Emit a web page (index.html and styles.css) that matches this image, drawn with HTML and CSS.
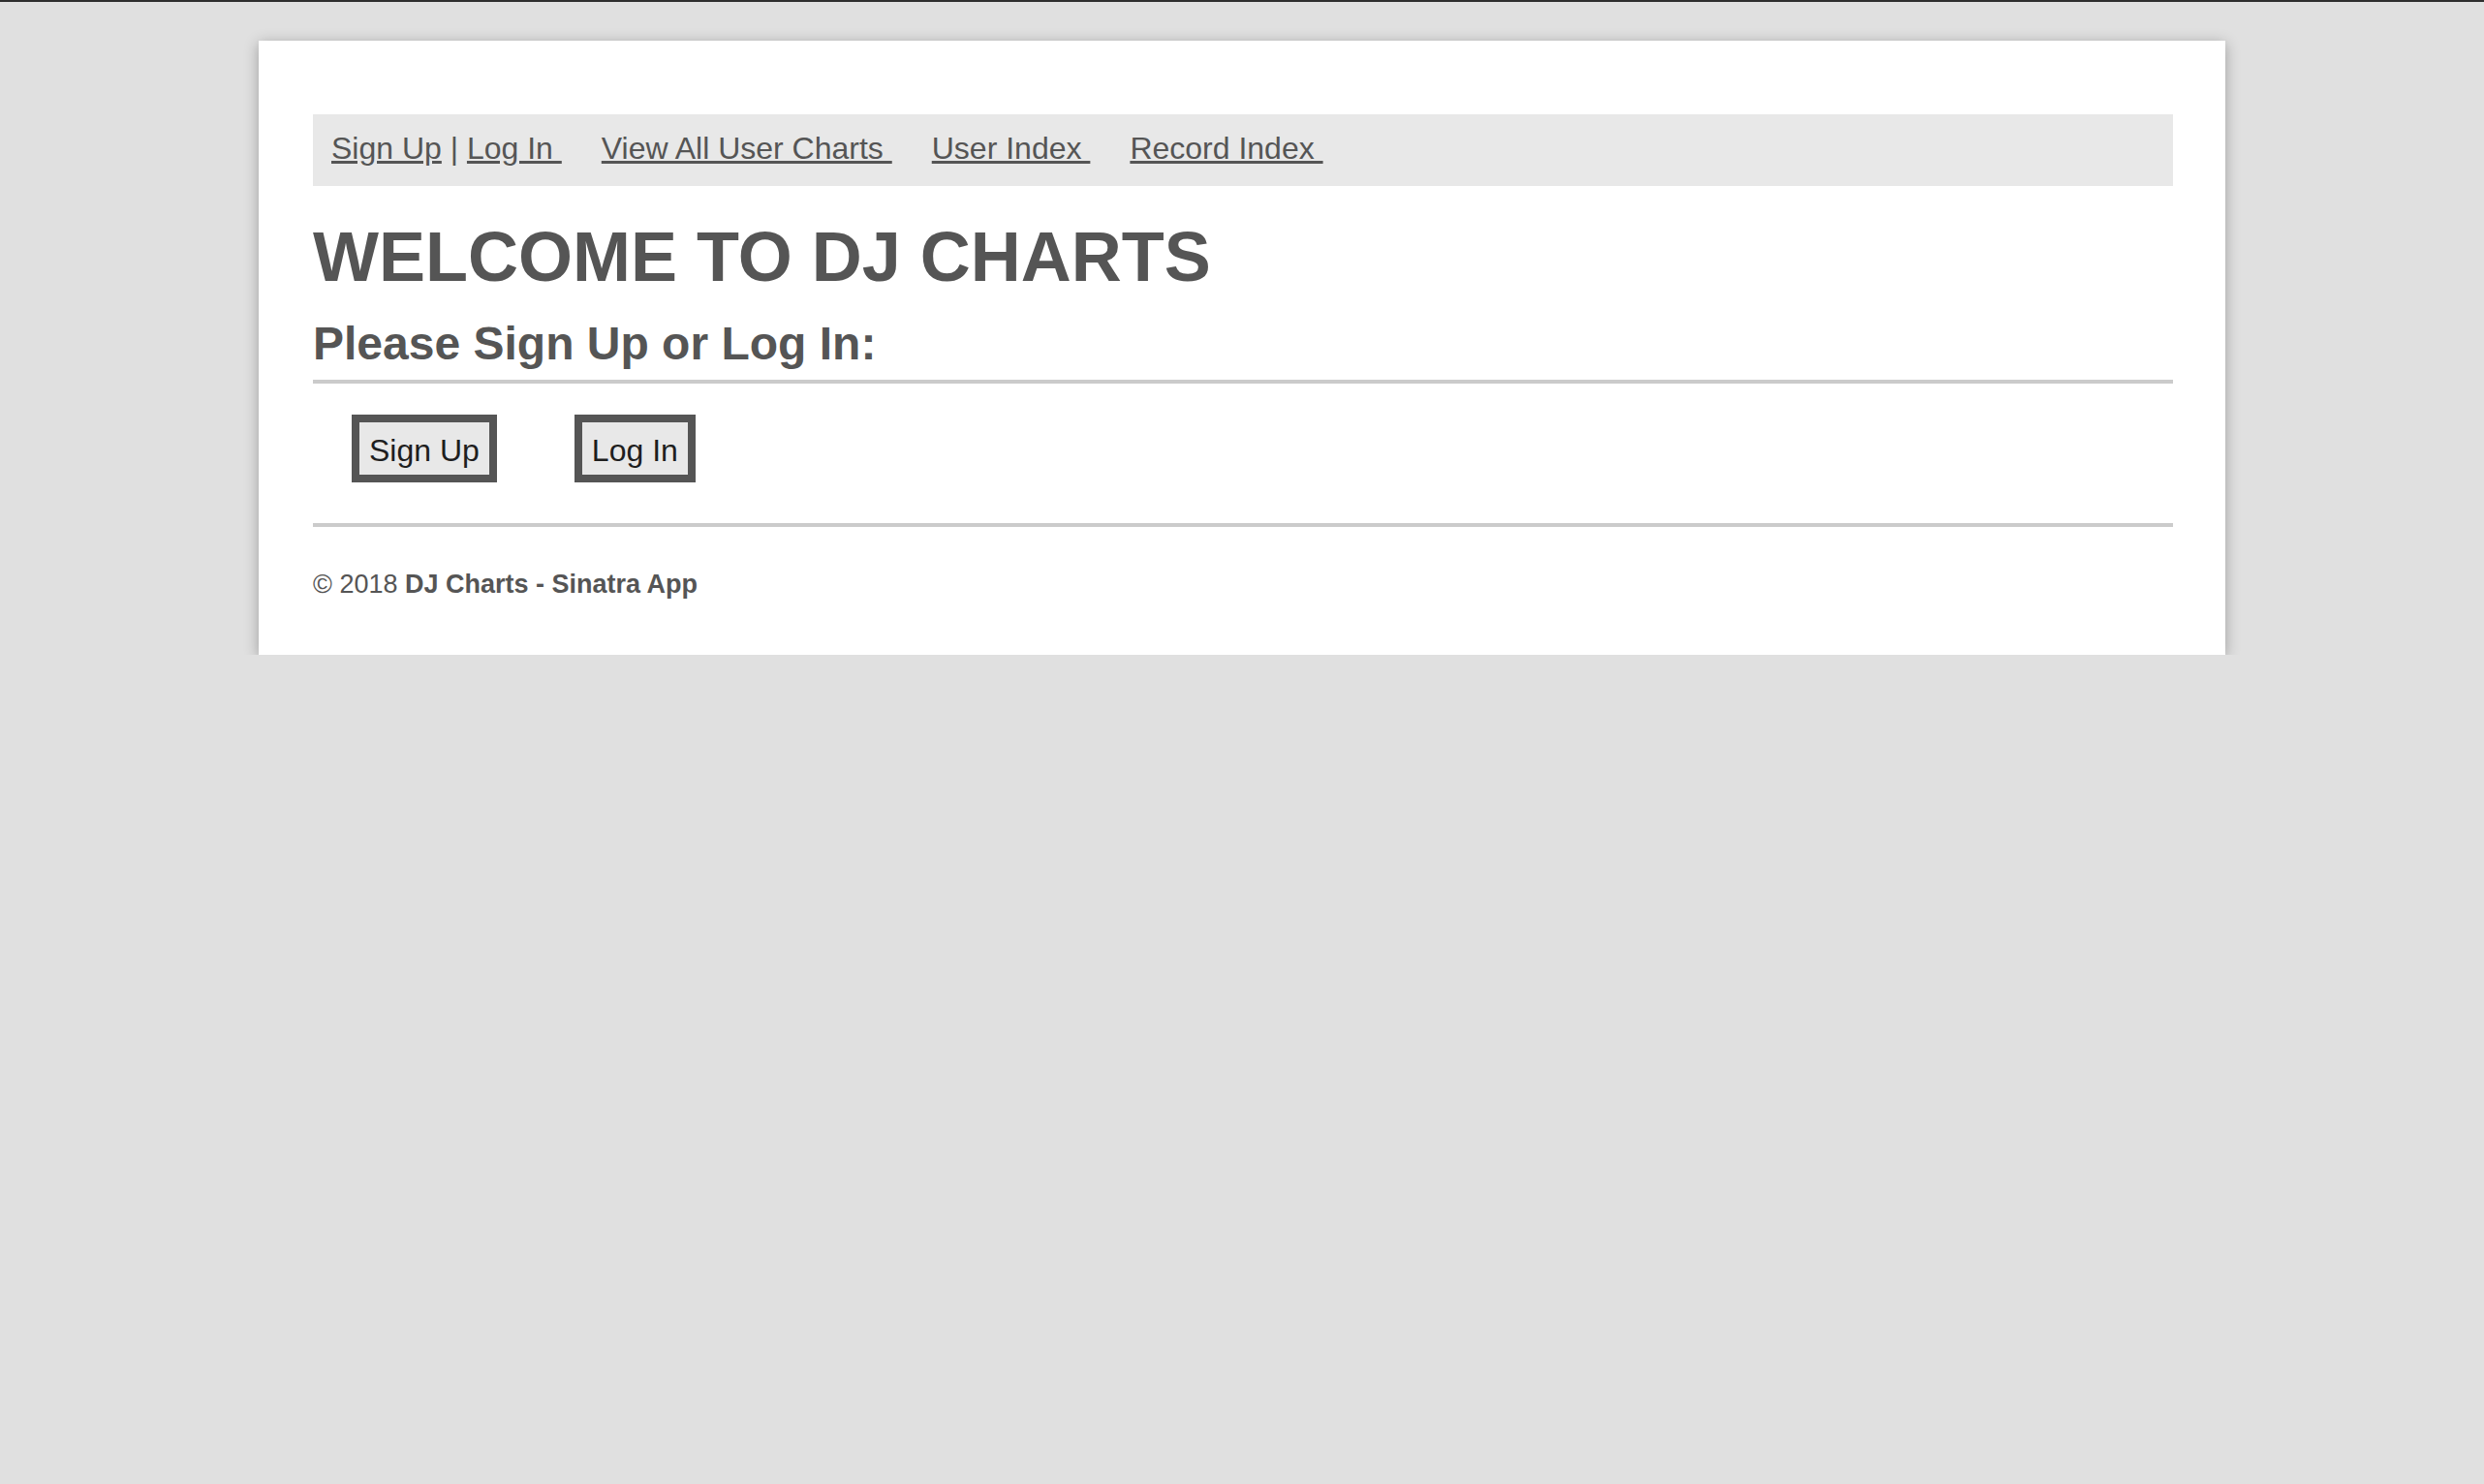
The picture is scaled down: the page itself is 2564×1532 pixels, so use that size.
FILE: index.html
```html
<!DOCTYPE html>
<html lang="en">
<head>
<meta charset="utf-8">
<title>DJ Charts</title>
<link rel="stylesheet" href="styles.css">
</head>
<body>
<div class="page">
  <nav class="nav">
    <span class="nav-auth"><a href="#" class="nav-link">Sign Up</a> | <a href="#" class="nav-link">Log In&nbsp;</a></span>
    <a href="#" class="nav-link">View All User Charts&nbsp;</a>
    <a href="#" class="nav-link">User Index&nbsp;</a>
    <a href="#" class="nav-link">Record Index&nbsp;</a>
  </nav>
  <h1 class="title">WELCOME TO DJ CHARTS</h1>
  <h2 class="subtitle">Please Sign Up or Log In:</h2>
  <hr class="rule">
  <div class="actions">
    <button class="btn" type="button">Sign Up</button>
    <button class="btn" type="button">Log In</button>
  </div>
  <hr class="rule rule-bottom">
  <footer class="footer">© 2018 <strong>DJ Charts - Sinatra App</strong></footer>
</div>
</body>
</html>
```

FILE: styles.css
```css
html {
  border-top: 2px solid #2e2e2e;
  background: #e0e0e0;
}

body {
  margin: 0;
  background: #e0e0e0;
  font-family: "Liberation Sans", Arial, Helvetica, sans-serif;
  color: #555;
}

.page {
  width: 2030px;
  box-sizing: border-box;
  margin: 40px auto 0;
  padding: 76px 54px 58px 56px;
  background: #fff;
  box-shadow: 0 3px 14px rgba(0, 0, 0, 0.3);
}

.nav {
  display: flex;
  align-items: baseline;
  gap: 41px;
  background: #e8e8e8;
  padding: 17px 19px 20px;
  font-size: 32px;
  line-height: 37px;
  white-space: nowrap;
}

.nav-link {
  color: #555;
  text-decoration: underline;
}

.title {
  margin: 37px 0 0;
  font-size: 72px;
  line-height: 72px;
  font-weight: bold;
  color: #555;
}

.subtitle {
  margin: 30px 0 0;
  font-size: 48px;
  line-height: 48px;
  font-weight: bold;
  color: #555;
}

.rule {
  margin: 13px 0 0;
  height: 4px;
  border: 0;
  background: #cbcbcb;
}

.rule-bottom {
  margin-top: 42px;
}

.actions {
  display: flex;
  gap: 80px;
  margin-top: 32px;
  padding-left: 40px;
}

.btn {
  font-family: "Liberation Sans", Arial, Helvetica, sans-serif;
  font-size: 32px;
  line-height: 38px;
  color: #1e1e1e;
  background: #e8e8e8;
  border: 8px solid #555;
  border-radius: 0;
  padding: 10px 10px 6px;
  margin: 0;
}

.footer {
  margin-top: 44px;
  font-size: 27px;
  line-height: 30px;
  color: #555;
}

.footer strong {
  font-weight: bold;
}
```
